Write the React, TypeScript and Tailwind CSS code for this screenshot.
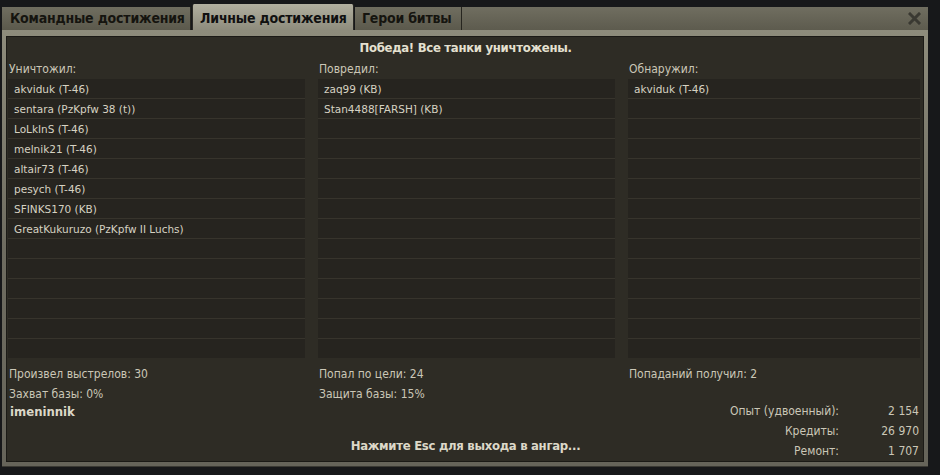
import React from "react";

const narrow = { fontFamily: "'Liberation Sans Narrow','DejaVu Sans Condensed','Roboto',sans-serif" };
const tahoma = { fontFamily: "'DejaVu Sans','Verdana',sans-serif" };

const col1 = [
  "akviduk (T-46)",
  "sentara (PzKpfw 38 (t))",
  "LoLkInS (T-46)",
  "melnik21 (T-46)",
  "altair73 (T-46)",
  "pesych (T-46)",
  "SFINKS170 (KB)",
  "GreatKukuruzo (PzKpfw II Luchs)",
];
const col2 = ["zaq99 (KB)", "Stan4488[FARSH] (KB)"];
const col3 = ["akviduk (T-46)"];

function List({ items, w }: { items: string[]; w: string }) {
  const rows = Array.from({ length: 14 }, (_, i) => items[i] ?? "");
  return (
    <div className={`${w} flex flex-col gap-[1px] bg-[#37342c]`}>
      {rows.map((r, i) => (
        <div
          key={i}
          className="h-[19px] bg-[#26241f] pl-[6px] text-[10.5px] leading-[21px] text-[#d6d2c2] whitespace-nowrap"
          style={tahoma}
        >
          {r}
        </div>
      ))}
    </div>
  );
}

export default function App() {
  return (
    <div className="w-[940px] h-[475px] bg-[#17181a] pt-[4px] pl-[2px] overflow-hidden">
      <div className="w-[926px] flex flex-col">
        {/* header */}
        <div className="flex items-end h-[26px] whitespace-nowrap" style={narrow}>
          <div className="w-[189px] h-[23px] bg-gradient-to-b from-[#706e60] to-[#5b594c] border-r border-[#26251f] pl-[8px] text-[14px] font-bold tracking-[-0.2px] leading-[23px] text-[#15140f]">
            Командные достижения
          </div>
          <div className="w-[162px] h-[26px] ml-[1px] bg-gradient-to-b from-[#b2b0a0] to-[#8e8c7d] border-x border-[#2a2924] rounded-t-[2px] pl-[7px] text-[14px] font-bold tracking-[-0.2px] leading-[28px] text-[#101010]">
            Личные достижения
          </div>
          <div className="w-[107px] h-[23px] ml-[1px] bg-gradient-to-b from-[#706e60] to-[#5b594c] border-r border-[#26251f] pl-[7px] text-[14px] font-bold tracking-[-0.2px] leading-[23px] text-[#15140f]">
            Герои битвы
          </div>
          <div className="flex-1 h-[23px] bg-gradient-to-b from-[#706e60] to-[#5d5b4e] flex items-center justify-end pr-[7px]">
            <svg width="13" height="13" viewBox="0 0 13 13">
              <path d="M2 2 L11 11 M11 2 L2 11" stroke="#3a3932" strokeWidth="3" strokeLinecap="square" />
            </svg>
          </div>
        </div>
        {/* frame */}
        <div className="bg-gradient-to-b from-[#8e8c7c] via-[#6e6c60] to-[#66645a] pt-[6px] pl-[4px] pr-[4px] pb-[4px] border-b border-[#3a3933]">
          <div className="border border-[#1b1a16] bg-[#2e2c25] flex flex-col pl-[1px] h-[426px]" style={narrow}>
            <div className="h-[22px] leading-[22px] text-center text-[13px] font-bold tracking-[-0.3px] text-[#e4e0d0]">
              Победа! Все танки уничтожены.
            </div>
            <div className="flex gap-[13px] h-[20px] leading-[20px] text-[12px] text-[#cbc7b7]">
              <div className="w-[297px] pl-[1px]">Уничтожил:</div>
              <div className="w-[297px] pl-[1px]">Повредил:</div>
              <div className="w-[292px] pl-[1px]">Обнаружил:</div>
            </div>
            <div className="flex gap-[13px]">
              <List items={col1} w="w-[297px]" />
              <List items={col2} w="w-[297px]" />
              <List items={col3} w="w-[292px]" />
            </div>
            <div className="flex gap-[13px] mt-[6px] text-[12px] text-[#cbc7b7] leading-[20px]">
              <div className="w-[297px] pl-[1px] flex flex-col">
                <span>Произвел выстрелов: 30</span>
                <span>Захват базы: 0%</span>
              </div>
              <div className="w-[297px] pl-[1px] flex flex-col">
                <span>Попал по цели: 24</span>
                <span>Защита базы: 15%</span>
              </div>
              <div className="w-[292px] pl-[1px] flex flex-col">
                <span>Попаданий получил: 2</span>
              </div>
            </div>
            <div className="grid grid-cols-[1fr_auto_1fr] -mt-[3px]">
              <div className="pl-[2px] pt-[2px] text-[13px] font-bold leading-[18px] text-[#dcd8c8]">imeninnik</div>
              <div className="self-end mb-[5px] text-[13px] font-bold tracking-[-0.3px] leading-[20px] text-[#dcd8c8]">
                Нажмите Esc для выхода в ангар...
              </div>
              <div className="justify-self-end grid grid-cols-[auto_80px] pr-[4px] text-[12px] leading-[20px] text-[#cbc7b7]">
                <span className="text-right">Опыт (удвоенный):</span>
                <span className="text-right">2 154</span>
                <span className="text-right">Кредиты:</span>
                <span className="text-right">26 970</span>
                <span className="text-right">Ремонт:</span>
                <span className="text-right">1 707</span>
              </div>
            </div>
          </div>
        </div>
      </div>
    </div>
  );
}
